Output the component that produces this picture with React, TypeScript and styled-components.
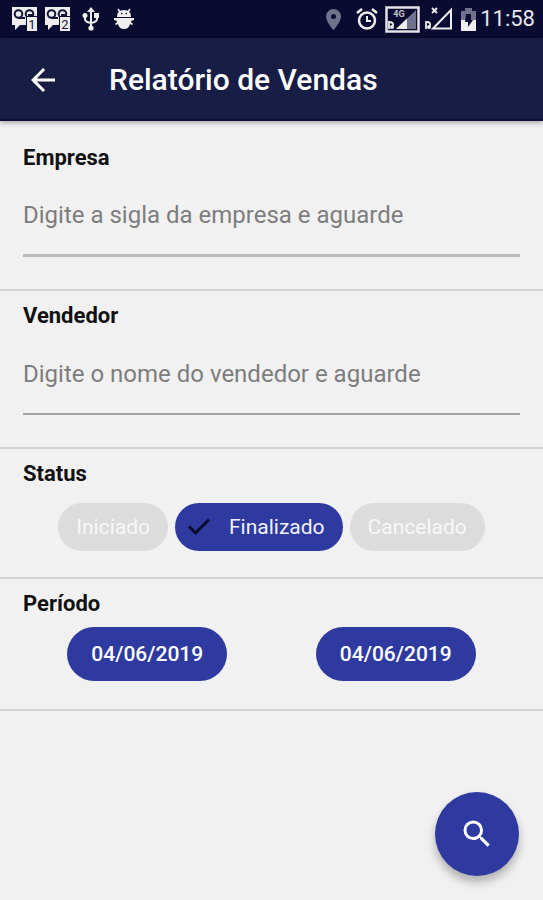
import React, { useState } from "react";
import styled, { createGlobalStyle } from "styled-components";

const GlobalStyle = createGlobalStyle`
  * { box-sizing: border-box; }
  body { margin: 0; background: #f1f1f1; }
  body, button, input { font-family: Roboto, "Liberation Sans", sans-serif; }
`;

const Screen = styled.div`
  min-height: 100vh;
  display: flex;
  flex-direction: column;
  background: #f1f1f1;
  color: #111;
`;

const StatusBar = styled.div`
  display: flex;
  justify-content: space-between;
  align-items: center;
  height: 38px;
  padding: 0 8px 0 11px;
  background: #0a0b31;
  color: #e6e6ec;
`;

const StatusGroup = styled.div<{ $gap: number }>`
  display: flex;
  align-items: center;
  gap: ${(p) => p.$gap}px;

  svg { display: block; flex: none; }
`;

const Clock = styled.time`
  font-size: 22px;
  line-height: 28px;
`;

const AppBar = styled.header`
  display: flex;
  align-items: center;
  gap: 48px;
  height: 83px;
  padding: 2px 25px 0;
  background: #181d46;
  border-bottom: 2px solid #0d0f3f;
  box-shadow: 0 1px 6px rgba(0, 0, 0, 0.4);
  color: #fff;
  z-index: 1;
`;

const BackButton = styled.button`
  display: flex;
  padding: 0;
  border: 0;
  background: none;
  color: inherit;
  cursor: pointer;
`;

const Title = styled.h1`
  margin: 0;
  font-size: 30px;
  line-height: 36px;
  font-weight: 500;
`;

const Form = styled.main`
  padding-top: 12px;
`;

const Section = styled.section<{ $bottom: number }>`
  padding: 11px 23px ${(p) => p.$bottom}px;
  border-bottom: 2px solid #d3d3d3;
`;

const labelText = `
  display: block;
  margin: 0;
  font-size: 22px;
  line-height: 28px;
  font-weight: 700;
`;

const Label = styled.label`${labelText}`;
const Heading = styled.h2`${labelText}`;

const TextField = styled.input<{ $strong?: boolean }>`
  display: block;
  width: 100%;
  height: 85px;
  padding: 4px 0 0;
  border: 0;
  border-bottom: ${(p) => (p.$strong ? "3px solid #bababa" : "2px solid #a5a5a5")};
  border-radius: 0;
  outline: none;
  background: none;
  color: #111;
  font-size: 24px;

  &::placeholder { color: #7d7d7d; opacity: 1; }
`;

const Chips = styled.div`
  display: flex;
  justify-content: center;
  gap: 7px;
  padding-top: 15px;
`;

const Chip = styled.button<{ $selected: boolean }>`
  display: flex;
  align-items: center;
  gap: 17px;
  height: 48px;
  padding: 0 18px 0 ${(p) => (p.$selected ? 11 : 18)}px;
  border: 0;
  border-radius: 24px;
  background: ${(p) => (p.$selected ? "#2e3a9f" : "#dcdcdc")};
  color: ${(p) => (p.$selected ? "#f1f2fb" : "#f8f8f8")};
  font-size: 21px;
  cursor: pointer;
`;

const Dates = styled.div`
  display: grid;
  grid-template-columns: 1fr 1fr;
  justify-items: center;
  padding-top: 9px;
`;

const DateButton = styled.button`
  height: 54px;
  padding: 0 24px;
  border: 0;
  border-radius: 27px;
  background: #2e3a9f;
  color: #fff;
  font-size: 21px;
  font-weight: 500;
  cursor: pointer;
`;

const SearchButton = styled.button`
  position: fixed;
  right: 24px;
  bottom: 24px;
  display: grid;
  place-items: center;
  width: 84px;
  height: 84px;
  padding: 0;
  border: 0;
  border-radius: 50%;
  background: #2e3a9f;
  color: #fff;
  box-shadow: 0 6px 10px rgba(0, 0, 0, 0.28);
  cursor: pointer;
`;

const MessageIcon = ({ count }: { count: number }) => (
  <svg width="27" height="26" viewBox="0 0 27 26" aria-hidden="true">
    <path d="M1 1h25v18H9l-5 5v-5H1z" fill="#eee" />
    <g fill="none" stroke="#15163a" strokeWidth="2">
      <circle cx="7.500" cy="8" r="3.800" />
      <circle cx="18.500" cy="8" r="3.800" />
      <path d="M7 12h7M17 9h6" />
    </g>
    <path d="M15 10h12v16H15z" fill="#0a0b31" />
    <path d="M16 11h10v14H16z" fill="#eee" />
    <text x="21" y="23" fontSize="13" textAnchor="middle" fill="#15163a" fontFamily="Roboto, sans-serif">
      {count}
    </text>
  </svg>
);

const UsbIcon = () => (
  <svg width="18" height="24" viewBox="0 0 18 24" aria-hidden="true">
    <g fill="none" stroke="#eee" strokeWidth="2">
      <path d="M9 4v16M3 9v3q0 3 6 4M15 8v4q0 3-6 4" />
    </g>
    <path d="M9 0l4 5H5zM12 6h5v5h-5z" fill="#eee" />
    <circle cx="3" cy="8.500" r="2.500" fill="#eee" />
    <circle cx="9" cy="21" r="2.600" fill="#eee" />
  </svg>
);

const DebugIcon = () => (
  <svg width="22" height="24" viewBox="0 0 22 24" aria-hidden="true">
    <path d="M5 2l2 3M17 2l-2 3" stroke="#eee" strokeWidth="1.500" />
    <path d="M4 10q0-7 7-7t7 7z" fill="#eee" />
    <path d="M1 11h20v2l-3 1v1l2 2-1 1-2-1q-1 5-6 5t-6-5l-2 1-1-1 2-2v-1l-3-1z" fill="#eee" />
    <path d="M8 6.500h1.500M12.500 6.500H14" stroke="#15163a" strokeWidth="1.500" />
  </svg>
);

const PinIcon = () => (
  <svg width="17" height="23" viewBox="0 0 17 23" aria-hidden="true">
    <path fillRule="evenodd" d="M8.500 1A7.500 7.500 0 0 0 1 8.500C1 14 8.500 22 8.500 22S16 14 16 8.500A7.500 7.500 0 0 0 8.500 1zM8.500 6a2.500 2.500 0 1 1 0 5 2.500 2.500 0 0 1 0-5z" fill="#70718c" />
  </svg>
);

const AlarmIcon = () => (
  <svg width="22" height="24" viewBox="0 0 22 24" fill="none" stroke="#eee" aria-hidden="true">
    <circle cx="11" cy="13.500" r="8" strokeWidth="2.500" />
    <path d="M11 9v5h4" strokeWidth="2" />
    <path d="M1 6l5-4M21 6l-5-4" strokeWidth="2.500" />
  </svg>
);

const DataSignalIcon = () => (
  <svg width="35" height="27" viewBox="0 0 35 27" aria-hidden="true">
    <path d="M1.500 1.500h32v24h-32z" fill="#0a0b31" stroke="#e3e3e8" strokeWidth="2.500" />
    <path d="M31 4v19H11z" fill="#70718c" />
    <path d="M22 12.500V23H11z" fill="#eee" />
    <text x="14" y="11" fontSize="9" fontWeight="700" textAnchor="middle" fill="#c5c5cf" fontFamily="Roboto, sans-serif">
      4G
    </text>
    <path d="M4 15v8M4 16q5 0 4 4" fill="none" stroke="#eee" strokeWidth="1.800" />
    <circle cx="7" cy="21" r="2" fill="#eee" />
  </svg>
);

const NoSignalIcon = () => (
  <svg width="30" height="26" viewBox="0 0 30 26" fill="none" stroke="#eee" aria-hidden="true">
    <path d="M27 4v18.500H9z" strokeWidth="2" />
    <path d="M8 2l5 5M13 2L8 7" strokeWidth="1.800" />
    <path d="M2 15v8M3 16q4 0 3 4" strokeWidth="1.800" />
    <circle cx="5" cy="21" r="2" fill="#eee" stroke="none" />
  </svg>
);

const BatteryIcon = () => (
  <svg width="15" height="23" viewBox="0 0 15 23" aria-hidden="true">
    <path d="M4 0h7v3h4v9H0V3h4z" fill="#70718c" />
    <path d="M0 12h15v11H0z" fill="#eee" />
    <path d="M5 6h5v6h2l-5 7v-5H4z" fill="#0a0b31" />
  </svg>
);

const ArrowIcon = () => (
  <svg width="36" height="36" viewBox="0 0 24 24" aria-hidden="true">
    <path d="M20 11H7.830l5.590-5.590L12 4l-8 8 8 8 1.410-1.410L7.830 13H20z" fill="currentColor" />
  </svg>
);

const CheckIcon = () => (
  <svg width="26" height="26" viewBox="0 0 26 26" fill="none" stroke="#090c2b" strokeWidth="3" aria-hidden="true">
    <path d="M3 12.500l6.500 6.500L23 5.500" />
  </svg>
);

const SearchIcon = () => (
  <svg width="36" height="36" viewBox="0 0 24 24" aria-hidden="true">
    <path d="M15.500 14h-.79l-.28-.27A6.471 6.471 0 0 0 16 9.500 6.500 6.500 0 1 0 9.500 16c1.610 0 3.090-.59 4.230-1.570l.27.28v.79l5 4.990L20.490 19zm-6 0C7.010 14 5 11.990 5 9.500S7.010 5 9.500 5 14 7.010 14 9.500 11.990 14 9.500 14z" fill="currentColor" />
  </svg>
);

const statuses = ["Iniciado", "Finalizado", "Cancelado"];

export default function App() {
  const [status, setStatus] = useState("Finalizado");

  return (
    <Screen>
      <GlobalStyle />
      <StatusBar>
        <StatusGroup $gap={11}>
          <StatusGroup $gap={6}>
            <MessageIcon count={1} />
            <MessageIcon count={2} />
          </StatusGroup>
          <StatusGroup $gap={13}>
            <UsbIcon />
            <DebugIcon />
          </StatusGroup>
        </StatusGroup>
        <StatusGroup $gap={7}>
          <StatusGroup $gap={14}>
            <PinIcon />
            <AlarmIcon />
          </StatusGroup>
          <StatusGroup $gap={4}>
            <DataSignalIcon />
            <NoSignalIcon />
          </StatusGroup>
          <StatusGroup $gap={4}>
            <BatteryIcon />
            <Clock>11:58</Clock>
          </StatusGroup>
        </StatusGroup>
      </StatusBar>
      <AppBar>
        <BackButton type="button" aria-label="Voltar">
          <ArrowIcon />
        </BackButton>
        <Title>Relatório de Vendas</Title>
      </AppBar>
      <Form>
        <Section $bottom={32}>
          <Label htmlFor="empresa">Empresa</Label>
          <TextField id="empresa" $strong placeholder="Digite a sigla da empresa e aguarde" />
        </Section>
        <Section $bottom={32}>
          <Label htmlFor="vendedor">Vendedor</Label>
          <TextField id="vendedor" placeholder="Digite o nome do vendedor e aguarde" />
        </Section>
        <Section $bottom={26}>
          <Heading id="status">Status</Heading>
          <Chips role="group" aria-labelledby="status">
            {statuses.map((name) => (
              <Chip
                key={name}
                type="button"
                $selected={name === status}
                aria-pressed={name === status}
                onClick={() => setStatus(name)}
              >
                {name === status && <CheckIcon />}
                {name}
              </Chip>
            ))}
          </Chips>
        </Section>
        <Section $bottom={28}>
          <Heading id="periodo">Período</Heading>
          <Dates role="group" aria-labelledby="periodo">
            <DateButton type="button">04/06/2019</DateButton>
            <DateButton type="button">04/06/2019</DateButton>
          </Dates>
        </Section>
      </Form>
      <SearchButton type="button" aria-label="Pesquisar">
        <SearchIcon />
      </SearchButton>
    </Screen>
  );
}
